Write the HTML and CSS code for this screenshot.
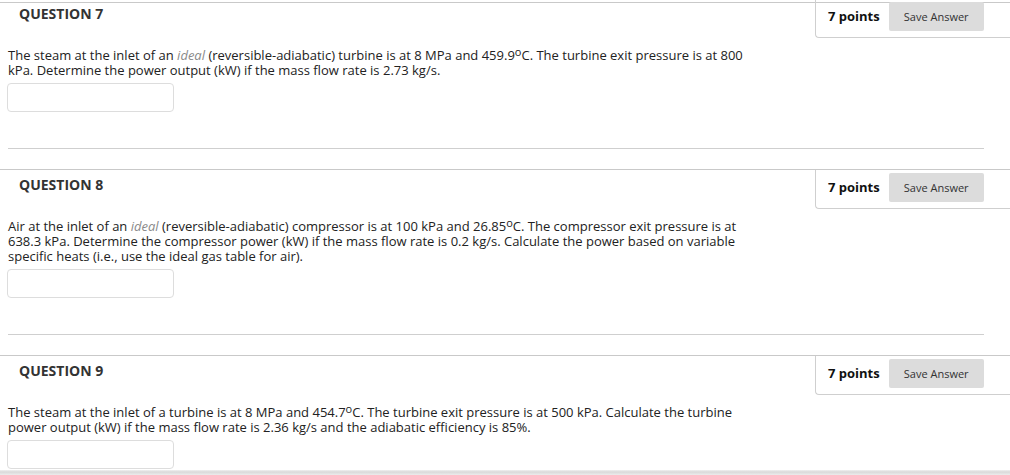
FILE: index.html
```html
<!DOCTYPE html>
<html>
<head>
<meta charset="utf-8">
<link rel="stylesheet" href="styles.css">
</head>
<body>
<div class="page">
  <div class="question first">
    <div class="q-head">
      <h3 class="q-title">QUESTION 7</h3>
      <div class="points-box"><span class="points">7 points</span><button class="save">Save Answer</button></div>
    </div>
    <div class="q-body">
      <p class="q-text">The steam at the inlet of an <em class="hint">ideal</em> (reversible-adiabatic) turbine is at 8 MPa and 459.9<sup class="deg">o</sup>C. The turbine exit pressure is at 800 kPa. Determine the power output (kW) if the mass flow rate is 2.73 kg/s.</p>
      <input class="answer" type="text">
      <div class="sep"></div>
    </div>
  </div>
  <div class="question">
    <div class="q-head">
      <h3 class="q-title">QUESTION 8</h3>
      <div class="points-box"><span class="points">7 points</span><button class="save">Save Answer</button></div>
    </div>
    <div class="q-body">
      <p class="q-text">Air at the inlet of an <em class="hint">ideal</em> (reversible-adiabatic) compressor is at 100 kPa and 26.85<sup class="deg">o</sup>C. The compressor exit pressure is at 638.3 kPa. Determine the compressor power (kW) if the mass flow rate is 0.2 kg/s. Calculate the power based on variable specific heats (i.e., use the ideal gas table for air).</p>
      <input class="answer" type="text">
      <div class="sep"></div>
    </div>
  </div>
  <div class="question">
    <div class="q-head">
      <h3 class="q-title">QUESTION 9</h3>
      <div class="points-box"><span class="points">7 points</span><button class="save">Save Answer</button></div>
    </div>
    <div class="q-body">
      <p class="q-text">The steam at the inlet of a turbine is at 8 MPa and 454.7<sup class="deg">o</sup>C. The turbine exit pressure is at 500 kPa. Calculate the turbine power output (kW) if the mass flow rate is 2.36 kg/s and the adiabatic efficiency is 85%.</p>
      <input class="answer" type="text">
    </div>
  </div>
</div>
<div class="bottom-shadow"></div>
</body>
</html>
```

FILE: styles.css
```css
html, body {
  margin: 0;
  padding: 0;
  background: #fff;
  overflow: hidden;
}
body {
  font-family: "Open Sans", "Liberation Sans", sans-serif;
  color: #222;
  width: 1010px;
  height: 475px;
  position: relative;
}
.page {
  padding-top: 2px;
}
.question {
  border-top: 1px solid #c9c9c9;
}
.question + .question {
  margin-top: 20px;
}
.q-head {
  display: flex;
  justify-content: space-between;
  align-items: flex-start;
  height: 39px;
}
.first .q-head {
  margin-top: -4px;
}
.q-title {
  margin: 6px 0 0 19px;
  font-size: 14px;
  line-height: 18px;
  font-weight: 700;
  color: #333;
}
.points-box {
  display: flex;
  align-items: center;
  box-sizing: border-box;
  height: 39px;
  padding: 3px 26px 6px 12px;
  border-left: 1px solid #cfcfcf;
  border-bottom: 1px solid #cfcfcf;
  border-bottom-left-radius: 4px;
  width: 195px;
}
.points {
  font-size: 13px;
  font-weight: 700;
  color: #111;
  line-height: 18px;
  padding-bottom: 2px;
  margin-right: 9px;
  white-space: nowrap;
}
.save {
  font-family: "Open Sans", "Liberation Sans", sans-serif;
  font-size: 11px;
  color: #333;
  background: #dcdcdc;
  border: none;
  border-radius: 2px;
  width: 95px;
  height: 29px;
  padding: 0;
  margin: 0;
}
.q-body {
  padding: 10px 26px 0 8px;
}
.q-text {
  margin: 0;
  width: 752px;
  font-size: 13px;
  line-height: 15px;
  color: #222;
}
.hint {
  font-style: italic;
  color: #8a8a8a;
}
.deg {
  font-size: 11px;
  line-height: 0;
  vertical-align: 4px;
}
.answer {
  display: block;
  box-sizing: border-box;
  margin: 5px 0 0 -1px;
  width: 167px;
  height: 29px;
  border: 1px solid #ddd;
  border-radius: 4px;
  background: #fff;
  padding: 0;
}
.sep {
  margin-top: 36px;
  height: 1px;
  background: #cfcfcf;
}
.bottom-shadow {
  position: absolute;
  left: 0;
  right: 0;
  bottom: 0;
  height: 5px;
  background: linear-gradient(#f0f0f0, #d9d9d9 40%, #ececec);
}
```
